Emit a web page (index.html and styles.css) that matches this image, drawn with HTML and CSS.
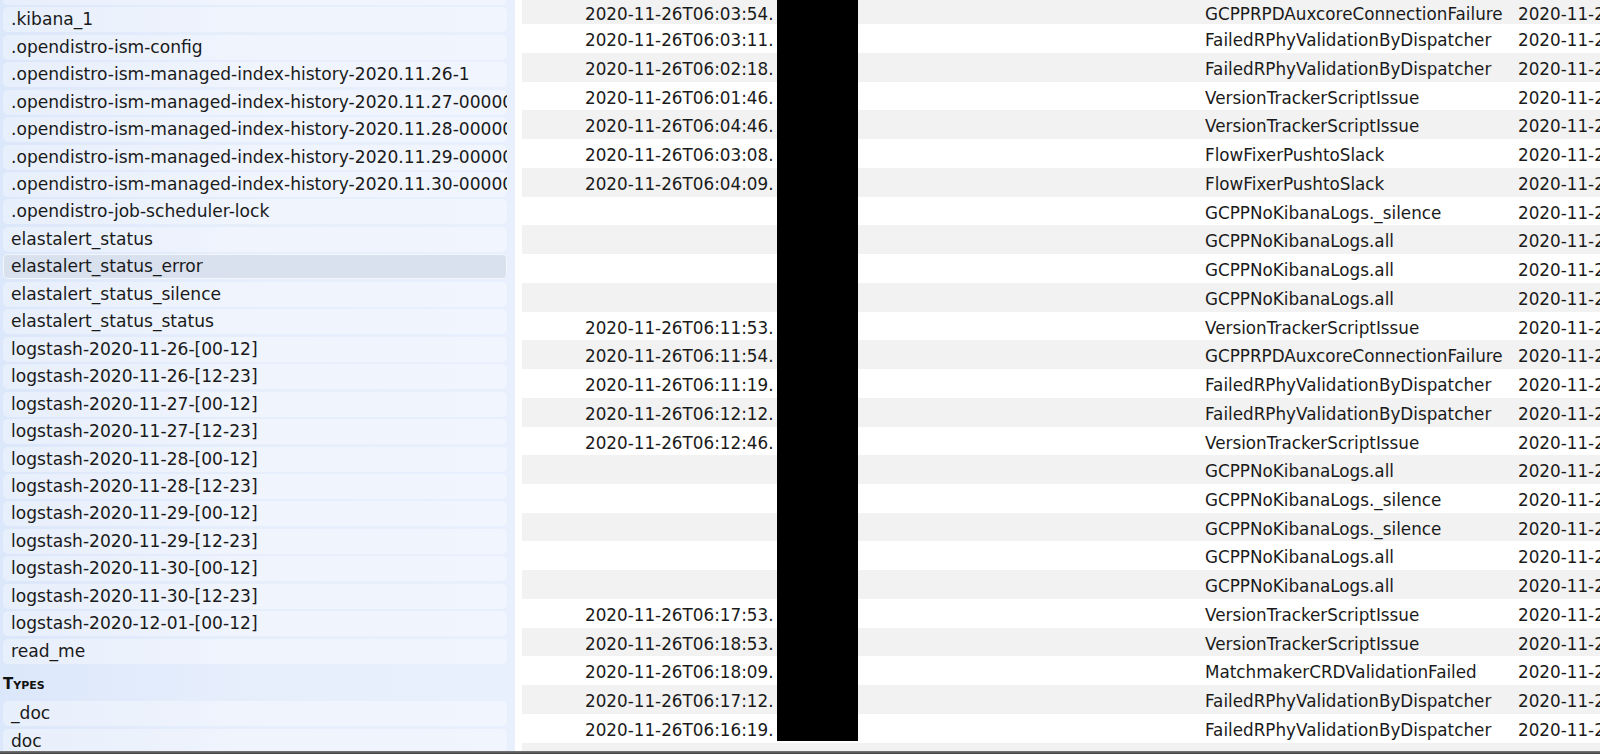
FILE: index.html
```html
<!DOCTYPE html>
<html lang="en">
<head>
<meta charset="utf-8">
<title>Index browser</title>
<link rel="stylesheet" href="styles.css">
</head>
<body>
<div class="app">
  <div class="main">
    <aside class="sidebar">
      <ul class="list list-indices">
        <li class="item">.kibana</li>
        <li class="item">.kibana_1</li>
        <li class="item">.opendistro-ism-config</li>
        <li class="item">.opendistro-ism-managed-index-history-2020.11.26-1</li>
        <li class="item">.opendistro-ism-managed-index-history-2020.11.27-000002</li>
        <li class="item">.opendistro-ism-managed-index-history-2020.11.28-000003</li>
        <li class="item">.opendistro-ism-managed-index-history-2020.11.29-000004</li>
        <li class="item">.opendistro-ism-managed-index-history-2020.11.30-000005</li>
        <li class="item">.opendistro-job-scheduler-lock</li>
        <li class="item">elastalert_status</li>
        <li class="item selected">elastalert_status_error</li>
        <li class="item">elastalert_status_silence</li>
        <li class="item">elastalert_status_status</li>
        <li class="item">logstash-2020-11-26-[00-12]</li>
        <li class="item">logstash-2020-11-26-[12-23]</li>
        <li class="item">logstash-2020-11-27-[00-12]</li>
        <li class="item">logstash-2020-11-27-[12-23]</li>
        <li class="item">logstash-2020-11-28-[00-12]</li>
        <li class="item">logstash-2020-11-28-[12-23]</li>
        <li class="item">logstash-2020-11-29-[00-12]</li>
        <li class="item">logstash-2020-11-29-[12-23]</li>
        <li class="item">logstash-2020-11-30-[00-12]</li>
        <li class="item">logstash-2020-11-30-[12-23]</li>
        <li class="item">logstash-2020-12-01-[00-12]</li>
        <li class="item">read_me</li>
      </ul>
      <h3 class="section-title">Types</h3>
      <ul class="list">
        <li class="item">_doc</li>
        <li class="item">doc</li>
      </ul>
    </aside>
    <section class="content">
      <div class="rows">
        <div class="row"><span class="c0"></span><span class="c1">2020-11-26T06:03:54.</span><span class="c2">GCPPRPDAuxcoreConnectionFailure</span><span class="c3">2020-11-26T06:03:55</span></div>
        <div class="row"><span class="c0"></span><span class="c1">2020-11-26T06:03:11.</span><span class="c2">FailedRPhyValidationByDispatcher</span><span class="c3">2020-11-26T06:03:12</span></div>
        <div class="row"><span class="c0"></span><span class="c1">2020-11-26T06:02:18.</span><span class="c2">FailedRPhyValidationByDispatcher</span><span class="c3">2020-11-26T06:02:19</span></div>
        <div class="row"><span class="c0"></span><span class="c1">2020-11-26T06:01:46.</span><span class="c2">VersionTrackerScriptIssue</span><span class="c3">2020-11-26T06:01:47</span></div>
        <div class="row"><span class="c0"></span><span class="c1">2020-11-26T06:04:46.</span><span class="c2">VersionTrackerScriptIssue</span><span class="c3">2020-11-26T06:04:47</span></div>
        <div class="row"><span class="c0"></span><span class="c1">2020-11-26T06:03:08.</span><span class="c2">FlowFixerPushtoSlack</span><span class="c3">2020-11-26T06:03:09</span></div>
        <div class="row"><span class="c0"></span><span class="c1">2020-11-26T06:04:09.</span><span class="c2">FlowFixerPushtoSlack</span><span class="c3">2020-11-26T06:04:10</span></div>
        <div class="row"><span class="c0"></span><span class="c1"></span><span class="c2">GCPPNoKibanaLogs._silence</span><span class="c3">2020-11-26T06:05:00</span></div>
        <div class="row"><span class="c0"></span><span class="c1"></span><span class="c2">GCPPNoKibanaLogs.all</span><span class="c3">2020-11-26T06:05:00</span></div>
        <div class="row"><span class="c0"></span><span class="c1"></span><span class="c2">GCPPNoKibanaLogs.all</span><span class="c3">2020-11-26T06:05:00</span></div>
        <div class="row"><span class="c0"></span><span class="c1"></span><span class="c2">GCPPNoKibanaLogs.all</span><span class="c3">2020-11-26T06:05:00</span></div>
        <div class="row"><span class="c0"></span><span class="c1">2020-11-26T06:11:53.</span><span class="c2">VersionTrackerScriptIssue</span><span class="c3">2020-11-26T06:11:54</span></div>
        <div class="row"><span class="c0"></span><span class="c1">2020-11-26T06:11:54.</span><span class="c2">GCPPRPDAuxcoreConnectionFailure</span><span class="c3">2020-11-26T06:11:55</span></div>
        <div class="row"><span class="c0"></span><span class="c1">2020-11-26T06:11:19.</span><span class="c2">FailedRPhyValidationByDispatcher</span><span class="c3">2020-11-26T06:11:20</span></div>
        <div class="row"><span class="c0"></span><span class="c1">2020-11-26T06:12:12.</span><span class="c2">FailedRPhyValidationByDispatcher</span><span class="c3">2020-11-26T06:12:13</span></div>
        <div class="row"><span class="c0"></span><span class="c1">2020-11-26T06:12:46.</span><span class="c2">VersionTrackerScriptIssue</span><span class="c3">2020-11-26T06:12:47</span></div>
        <div class="row"><span class="c0"></span><span class="c1"></span><span class="c2">GCPPNoKibanaLogs.all</span><span class="c3">2020-11-26T06:15:00</span></div>
        <div class="row"><span class="c0"></span><span class="c1"></span><span class="c2">GCPPNoKibanaLogs._silence</span><span class="c3">2020-11-26T06:15:00</span></div>
        <div class="row"><span class="c0"></span><span class="c1"></span><span class="c2">GCPPNoKibanaLogs._silence</span><span class="c3">2020-11-26T06:15:00</span></div>
        <div class="row"><span class="c0"></span><span class="c1"></span><span class="c2">GCPPNoKibanaLogs.all</span><span class="c3">2020-11-26T06:15:00</span></div>
        <div class="row"><span class="c0"></span><span class="c1"></span><span class="c2">GCPPNoKibanaLogs.all</span><span class="c3">2020-11-26T06:15:00</span></div>
        <div class="row"><span class="c0"></span><span class="c1">2020-11-26T06:17:53.</span><span class="c2">VersionTrackerScriptIssue</span><span class="c3">2020-11-26T06:17:54</span></div>
        <div class="row"><span class="c0"></span><span class="c1">2020-11-26T06:18:53.</span><span class="c2">VersionTrackerScriptIssue</span><span class="c3">2020-11-26T06:18:54</span></div>
        <div class="row"><span class="c0"></span><span class="c1">2020-11-26T06:18:09.</span><span class="c2">MatchmakerCRDValidationFailed</span><span class="c3">2020-11-26T06:18:10</span></div>
        <div class="row"><span class="c0"></span><span class="c1">2020-11-26T06:17:12.</span><span class="c2">FailedRPhyValidationByDispatcher</span><span class="c3">2020-11-26T06:17:13</span></div>
        <div class="row"><span class="c0"></span><span class="c1">2020-11-26T06:16:19.</span><span class="c2">FailedRPhyValidationByDispatcher</span><span class="c3">2020-11-26T06:16:20</span></div>
        <div class="row"><span class="c0"></span><span class="c1"></span><span class="c2"></span><span class="c3"></span></div>
      </div>
      <div class="redaction"></div>
    </section>
  </div>
  <div class="strip"></div>
</div>
</body>
</html>
```

FILE: styles.css
```css
html, body {
  margin: 0;
  padding: 0;
  width: 1600px;
  height: 754px;
  overflow: hidden;
  background: #ffffff;
}

body {
  font-family: "DejaVu Sans", Verdana, sans-serif;
  color: #1a1a1a;
}

.app {
  display: flex;
  flex-direction: column;
  height: 754px;
}

.main {
  display: flex;
  flex-direction: row;
  height: 751px;
  overflow: hidden;
}

.sidebar {
  width: 515px;
  flex: 0 0 515px;
  box-sizing: border-box;
  padding: 0 8px 0 3px;
  background: linear-gradient(to right, #dbe7fa 0%, #e6eefc 45%, #e9f0fd 100%);
  overflow: hidden;
  font-size: 17.1px;
}

.list {
  list-style: none;
  margin: 0;
  padding: 0;
  display: flex;
  flex-direction: column;
  gap: 2.46px;
}

.list-indices {
  margin-top: -20.16px;
}

.item {
  height: 25px;
  line-height: 25.5px;
  box-sizing: border-box;
  padding: 0 4px 0 8px;
  border-radius: 5px;
  background: rgba(255, 255, 255, 0.35);
  white-space: nowrap;
  overflow: hidden;
}

.item.selected {
  background: #d9e1ee;
  box-shadow: inset 0 0 0 1px #f3f6fb;
}

.section-title {
  margin: 2.46px 0 0;
  padding: 8.4px 0 8.6px 0;
  font-size: 15px;
  line-height: 18px;
  font-weight: bold;
  font-variant: small-caps;
  color: #111;
}

.content {
  position: relative;
  flex: 1 1 auto;
  margin-left: 7px;
  overflow: hidden;
  font-size: 16.8px;
}

.rows {
  margin-top: -4.5px;
}

.row {
  display: grid;
  grid-template-columns: 63px 620px 313px 1fr;
  height: 28.74px;
  line-height: 32.6px;
  white-space: nowrap;
}

.row:first-child {
  line-height: 36.6px;
}

.row:nth-child(odd) {
  background: #f2f2f2;
}

.redaction {
  position: absolute;
  left: 255px;
  top: 0;
  width: 81px;
  height: 741px;
  background: #000;
}

.strip {
  height: 3px;
  background: linear-gradient(#7a7a7a, #3e3e3e);
}
```
